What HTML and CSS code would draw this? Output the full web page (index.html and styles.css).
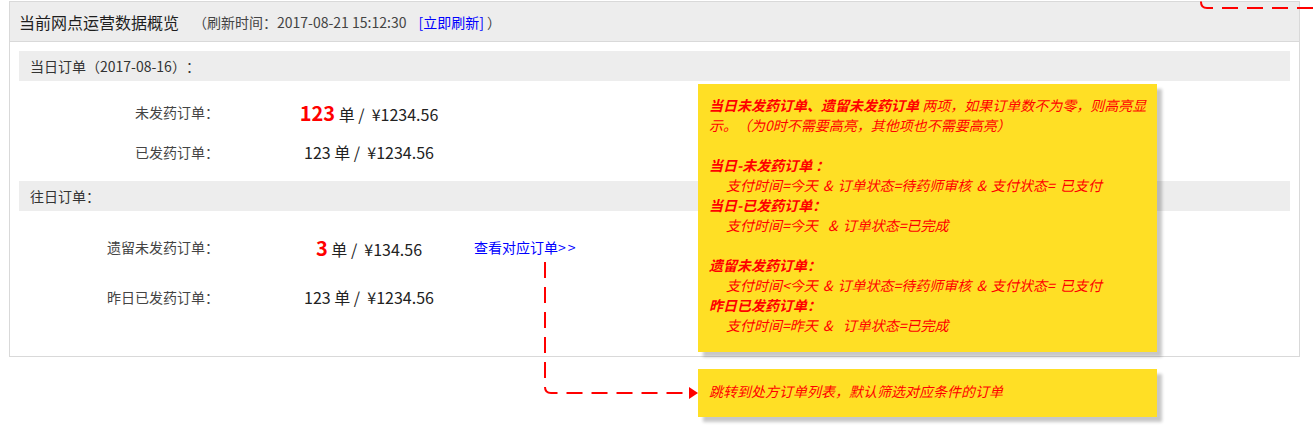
FILE: index.html
```html
<!DOCTYPE html>
<html lang="zh-CN">
<head>
<meta charset="utf-8">
<title>当前网点运营数据概览</title>
<link rel="stylesheet" href="styles.css">
</head>
<body>
<div class="page">
  <div class="panel">
    <div class="panel-head">
      <span class="title">当前网点运营数据概览</span>
      <span class="refresh">（刷新时间：2017-08-21 15:12:30<a class="link refresh-link" href="#">[立即刷新]</a> ）</span>
    </div>
    <div class="panel-body">
      <div class="sec-bar">当日订单（2017-08-16）：</div>
      <div class="rows">
        <div class="row">
          <div class="label">未发药订单：</div>
          <div class="value"><span class="num hl">123</span> 单 /&nbsp; ¥1234.56</div>
        </div>
        <div class="row">
          <div class="label">已发药订单：</div>
          <div class="value"><span class="num">123</span> 单 /&nbsp; ¥1234.56</div>
        </div>
      </div>
      <div class="sec-bar">往日订单：</div>
      <div class="rows rows-past">
        <div class="row row-tall">
          <div class="label">遗留未发药订单：</div>
          <div class="value"><span class="num hl">3</span> 单 /&nbsp; ¥134.56</div>
          <a class="link more" href="#">查看对应订单<span class="arrows">&gt;&gt;</span></a>
        </div>
        <div class="row row-tall">
          <div class="label">昨日已发药订单：</div>
          <div class="value"><span class="num">123</span> 单 /&nbsp; ¥1234.56</div>
        </div>
      </div>
    </div>
  </div>

  <div class="note note-main">
    <p><b>当日未发药订单、遗留未发药订单</b> 两项，如果订单数不为零，则高亮显示。（为0时不需要高亮，其他项也不需要高亮）</p>
    <div class="group">
      <p><b>当日-未发药订单 ：</b></p>
      <p class="ind">支付时间=今天 &amp; 订单状态=待药师审核 &amp; 支付状态= 已支付</p>
      <p><b>当日-已发药订单：</b></p>
      <p class="ind">支付时间=今天&nbsp; &amp; 订单状态=已完成</p>
    </div>
    <div class="group">
      <p><b>遗留未发药订单：</b></p>
      <p class="ind">支付时间&lt;今天 &amp; 订单状态=待药师审核 &amp; 支付状态= 已支付</p>
      <p><b>昨日已发药订单：</b></p>
      <p class="ind">支付时间=昨天 &amp;&nbsp; 订单状态=已完成</p>
    </div>
  </div>

  <div class="note note-jump">
    <p>跳转到处方订单列表，默认筛选对应条件的订单</p>
  </div>

  <svg class="connectors" width="1313" height="425" viewBox="0 0 1313 425">
    <path d="M545 262 L545 387 Q545 393 551 393 L690 393" fill="none" stroke="#ff0000" stroke-width="2" stroke-dasharray="16 9"/>
    <polygon points="689,387 698,393 689,399" fill="#ff0000"/>
    <path d="M1313 8 L1207 8 Q1201 8 1201 2 L1201 0" fill="none" stroke="#ff0000" stroke-width="2" stroke-dasharray="16 9"/>
  </svg>
</div>
</body>
</html>
```

FILE: styles.css
```css
html, body {
  margin: 0;
  padding: 0;
  background: #ffffff;
}

body {
  font-family: "Noto Sans CJK SC", "Noto Sans", "Liberation Sans", sans-serif;
  color: #333333;
  text-spacing-trim: space-all;
}

.page {
  position: relative;
  width: 1313px;
  height: 425px;
  overflow: hidden;
  box-sizing: border-box;
  padding: 1px 0 0 9px;
}

.panel {
  width: 1291px;
  box-sizing: border-box;
  border: 1px solid #d9d9d9;
  background: #ffffff;
}

.panel-head {
  height: 39px;
  background: #ededed;
  border-bottom: 1px solid #d9d9d9;
  display: flex;
  align-items: center;
  padding-left: 9px;
}

.title {
  font-size: 16px;
  color: #1e1e1e;
}

.refresh {
  margin-left: 14px;
  font-size: 14px;
  color: #444444;
}

.link {
  color: #0000ff;
  text-decoration: none;
}

.refresh-link {
  margin-left: 12px;
}

.panel-body {
  padding: 9px 9px 34px 9px;
}

.sec-bar {
  height: 30px;
  background: #ededed;
  display: flex;
  align-items: center;
  padding-left: 11px;
  font-size: 14px;
  color: #333333;
}

.rows {
  padding: 11px 0 9px 0;
}

.rows-past {
  padding-bottom: 0;
}

.row {
  height: 40px;
  display: flex;
  align-items: center;
}

.row-tall {
  height: 50px;
}

.label {
  width: 200px;
  text-align: right;
  font-size: 14px;
  color: #444444;
}

.value {
  width: 200px;
  margin-left: 50px;
  text-align: center;
  font-size: 16px;
  color: #222222;
  white-space: nowrap;
}

.num.hl {
  font-size: 20px;
  font-weight: bold;
  color: #ff0000;
}

.more {
  margin-left: 5px;
  font-size: 14px;
}

.arrows {
  letter-spacing: 2px;
}

.note {
  position: absolute;
  left: 698px;
  width: 459px;
  box-sizing: border-box;
  background: #ffdf25;
  color: #ff0000;
  font-style: italic;
  font-size: 14px;
  line-height: 20px;
  box-shadow: 5px 5px 3px rgba(0, 0, 0, 0.22);
}

.note p {
  margin: 0;
}

.note-main {
  top: 84px;
  height: 268px;
  padding: 11px 5px 0 11px;
}

.note-main .group {
  margin-top: 20px;
}

.note .ind {
  padding-left: 17px;
  word-spacing: 2px;
}

.note-jump {
  top: 369px;
  height: 48px;
  padding: 12px 5px 0 11px;
}

.connectors {
  position: absolute;
  left: 0;
  top: 0;
  pointer-events: none;
}
```
